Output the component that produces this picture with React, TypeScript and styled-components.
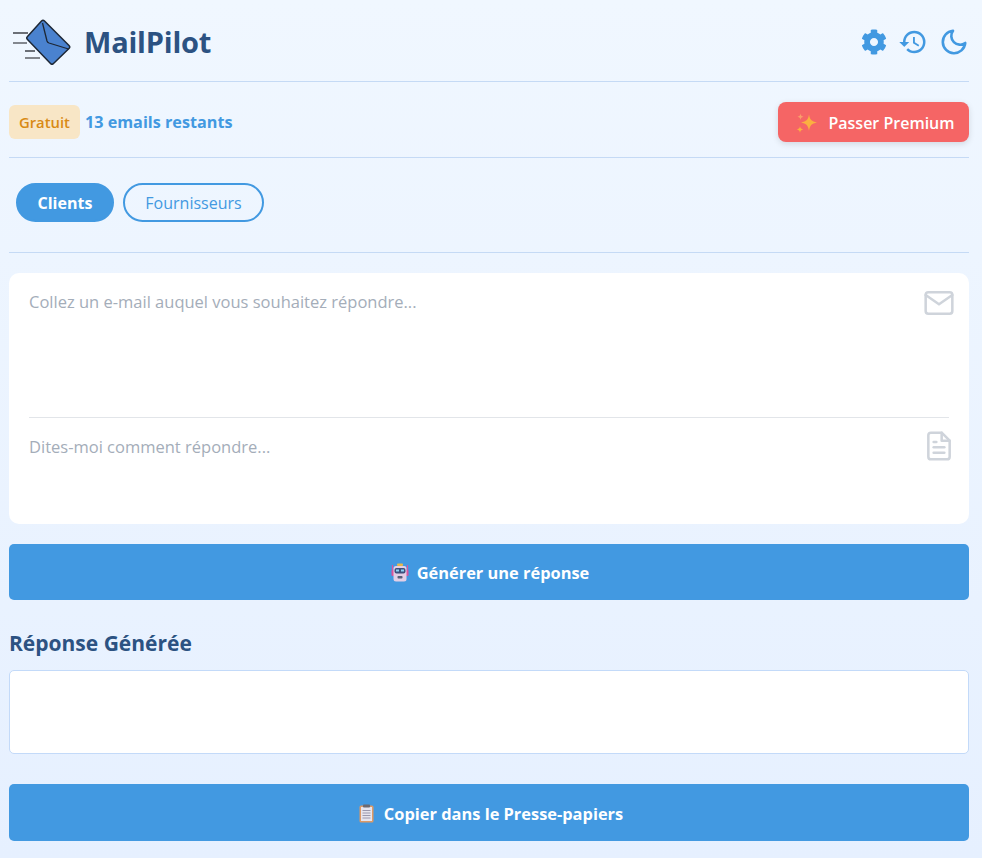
import React, { useState } from 'react';
import styled, { createGlobalStyle } from 'styled-components';
import { FaCog } from 'react-icons/fa';
import { FiMail, FiFileText, FiMoon } from 'react-icons/fi';
import { MdHistory } from 'react-icons/md';

const GlobalStyle = createGlobalStyle`
  html, body {
    margin: 0;
    padding: 0;
  }
  body {
    min-height: 858px;
    background: linear-gradient(180deg, #f0f7ff 0%, #e6f0ff 100%);
    font-family: "Open Sans", "Noto Sans", "Liberation Sans", sans-serif;
  }
  * {
    box-sizing: border-box;
  }
`;

const Page = styled.div`
  padding: 0 13px 0 9px;
  display: flex;
  flex-direction: column;
`;

const Header = styled.header`
  height: 82px;
  padding-top: 2px;
  display: flex;
  align-items: center;
  justify-content: space-between;
  border-bottom: 1px solid #c5daf5;
`;

const Brand = styled.div`
  display: flex;
  align-items: center;
  gap: 13px;
  padding-left: 4px;
`;

const Title = styled.h1`
  margin: 0;
  font-size: 29px;
  font-weight: 700;
  color: #2c5282;
  letter-spacing: -0.2px;
`;

const IconBar = styled.div`
  display: flex;
  align-items: center;
  gap: 11px;
  color: #4299e1;
`;

const IconButton = styled.button`
  padding: 0;
  border: none;
  background: none;
  color: inherit;
  display: flex;
  cursor: pointer;
`;

const PlanRow = styled.div`
  height: 76px;
  padding-top: 4px;
  display: flex;
  align-items: center;
  justify-content: space-between;
  border-bottom: 1px solid #c5daf5;
`;

const PlanInfo = styled.div`
  display: flex;
  align-items: center;
  gap: 5px;
`;

const PlanBadge = styled.span`
  height: 34px;
  padding: 0 10px;
  display: flex;
  align-items: center;
  border-radius: 6px;
  background: #f8e6c6;
  color: #d98a14;
  font-size: 14.8px;
  font-weight: 600;
`;

const Remaining = styled.span`
  color: #4299e1;
  font-size: 16.2px;
  font-weight: 700;
`;

const PremiumButton = styled.button`
  width: 191px;
  height: 40px;
  padding: 2px 0 0 4px;
  display: flex;
  align-items: center;
  justify-content: center;
  gap: 10px;
  border: none;
  border-radius: 8px;
  background: #f56565;
  color: #fff;
  font-family: inherit;
  font-size: 16px;
  font-weight: 600;
  box-shadow: 0 2px 6px rgba(0, 0, 0, 0.12);
  cursor: pointer;
`;

const Tabs = styled.div`
  height: 95px;
  padding: 25px 7px 0;
  display: flex;
  align-items: flex-start;
  gap: 9px;
  border-bottom: 1px solid #c5daf5;
`;

const Tab = styled.button<{ $active?: boolean }>`
  height: 39px;
  padding: 0 ${(p) => (p.$active ? 19.5 : 20.5)}px;
  border: 2px solid #4299e1;
  border-radius: 20px;
  background: ${(p) => (p.$active ? '#4299e1' : 'transparent')};
  color: ${(p) => (p.$active ? '#fff' : '#4299e1')};
  font-family: inherit;
  font-size: 16px;
  font-weight: ${(p) => (p.$active ? 700 : 400)};
  cursor: pointer;
`;

const InputCard = styled.div`
  margin-top: 20px;
  height: 251px;
  padding: 0 20px;
  display: flex;
  flex-direction: column;
  border-radius: 10px;
  background: #fff;
`;

const Field = styled.div<{ $first?: boolean }>`
  position: relative;
  height: ${(p) => (p.$first ? 145 : 105)}px;
  padding-top: 18px;
  border-bottom: ${(p) => (p.$first ? '1px solid #e2e5e9' : 'none')};
`;

const Prompt = styled.textarea`
  width: 100%;
  height: 60px;
  padding: 0;
  border: none;
  outline: none;
  resize: none;
  background: transparent;
  font-family: inherit;
  font-size: 16.5px;
  line-height: 22px;
  color: #2d3748;

  &::placeholder {
    color: #a4adb9;
    opacity: 1;
  }
`;

const FieldIcon = styled.span<{ $top: number }>`
  position: absolute;
  top: ${(p) => p.$top}px;
  right: -6px;
  display: flex;
  color: #cfd4db;
`;

const ActionButton = styled.button<{ $top: number; $height: number }>`
  width: 100%;
  height: ${(p) => p.$height}px;
  margin-top: ${(p) => p.$top}px;
  padding: 1px 0 0 2px;
  display: flex;
  align-items: center;
  justify-content: center;
  gap: 8px;
  border: none;
  border-radius: 5px;
  background: #4299e1;
  color: #fff;
  font-family: inherit;
  font-size: 16.4px;
  font-weight: 700;
  cursor: pointer;
`;

const SectionTitle = styled.h2`
  margin: 29px 0 0;
  height: 41px;
  font-size: 21px;
  line-height: 28px;
  font-weight: 700;
  color: #2c5282;
`;

const Output = styled.div`
  height: 84px;
  border: 1px solid #c3daf9;
  border-radius: 5px;
  background: #fff;
`;

function Logo() {
  return (
    <svg width="58" height="46" viewBox="0 0 58 46">
      <g stroke="#33363d" strokeWidth="1.4">
        <path d="M0 14h15" />
        <path d="M0 24h14" stroke="#55585f" />
        <path d="M12 32h10" />
        <path d="M12 39h15" stroke="#66696f" strokeWidth="1.6" />
      </g>
      <path
        d="M14.500 17.500 28.500 2q1.500-1.500 3 0L56 26.500q1.500 1.500 0 3L40.500 44.500q-1.500 1.500-3 0L14.500 20.500q-1.500-1.500 0-3Z"
        fill="#4a82cf"
        stroke="#1d2735"
        strokeWidth="1.5"
        strokeLinejoin="round"
      />
      <path d="M29.500 4 34 22q.5 1.500 2 2L55.500 30" fill="none" stroke="#1d2735" strokeWidth="1.300" />
    </svg>
  );
}

function Sparkles() {
  return (
    <svg width="22" height="22" viewBox="0 0 22 22">
      <path d="M13 2.500c.8 5 2.500 7 8 8-5.500 1-7.200 3-8 8.500-.8-5.500-2.500-7.500-8-8.500 5.500-1 7.200-3 8-8Z" fill="#fbb040" />
      <path d="M4.500 1.500c.3 2 1 2.800 3 3.200-2 .4-2.700 1.200-3 3.200-.3-2-1-2.800-3-3.200 2-.4 2.700-1.200 3-3.200Z" fill="#fa9d6a" />
      <path d="M4 14c.3 2.200 1.100 3 3.200 3.400C5.100 17.800 4.300 18.600 4 21c-.3-2.400-1.100-3.200-3.200-3.600C2.900 17 3.700 16.200 4 14Z" fill="#fbb040" />
    </svg>
  );
}

function Robot() {
  return (
    <svg width="18" height="20" viewBox="0 0 18 20">
      <rect x="6" y="0.500" width="6" height="2.500" rx="1" fill="#e4b84c" />
      <path d="M1.500 2v7M16.500 2v7" stroke="#d9559c" strokeWidth="1.200" />
      <rect x="0.500" y="7" width="2.500" height="6" rx="1" fill="#d9559c" />
      <rect x="15" y="7" width="2.500" height="6" rx="1" fill="#d9559c" />
      <rect x="2.500" y="3" width="13" height="15.500" rx="2.500" fill="#e3cfe6" />
      <rect x="3.500" y="5" width="11" height="5.500" rx="2" fill="#3d4f7c" />
      <rect x="5" y="6.500" width="3" height="2" fill="#8fd3f5" />
      <rect x="10" y="6.500" width="3" height="2" fill="#8fd3f5" />
      <rect x="6.500" y="13" width="5" height="2.500" rx="0.800" fill="#5a5f78" />
    </svg>
  );
}

function Clipboard() {
  return (
    <svg width="19" height="19" viewBox="-2 0 19 19">
      <rect x="0.500" y="1.500" width="14" height="17" rx="1.500" fill="#dd9a66" />
      <rect x="2" y="3" width="11" height="14" fill="#e6e5ee" />
      <rect x="4" y="0.500" width="7" height="3" rx="0.800" fill="#6d6a70" />
      <path d="M3.500 6.500h8M3.500 9h8M3.500 11.500h8M3.500 14h8" stroke="#9a98ad" strokeWidth="1" />
    </svg>
  );
}

export default function App() {
  const [tab, setTab] = useState('clients');

  return (
    <>
      <GlobalStyle />
      <Page>
        <Header>
          <Brand>
            <Logo />
            <Title>MailPilot</Title>
          </Brand>
          <IconBar>
            <IconButton aria-label="Réglages"><FaCog size={26} /></IconButton>
            <IconButton aria-label="Historique"><MdHistory size={30} /></IconButton>
            <IconButton aria-label="Mode sombre"><FiMoon size={30} strokeWidth={2.1} /></IconButton>
          </IconBar>
        </Header>

        <PlanRow>
          <PlanInfo>
            <PlanBadge>Gratuit</PlanBadge>
            <Remaining>13 emails restants</Remaining>
          </PlanInfo>
          <PremiumButton><Sparkles />Passer Premium</PremiumButton>
        </PlanRow>

        <Tabs>
          <Tab $active={tab === 'clients'} onClick={() => setTab('clients')}>Clients</Tab>
          <Tab $active={tab === 'fournisseurs'} onClick={() => setTab('fournisseurs')}>Fournisseurs</Tab>
        </Tabs>

        <InputCard>
          <Field $first>
            <Prompt placeholder="Collez un e-mail auquel vous souhaitez répondre..." />
            <FieldIcon $top={14}><FiMail size={32} strokeWidth={1.9} /></FieldIcon>
          </Field>
          <Field>
            <Prompt placeholder="Dites-moi comment répondre..." />
            <FieldIcon $top={12}><FiFileText size={32} strokeWidth={1.9} /></FieldIcon>
          </Field>
        </InputCard>

        <ActionButton $top={20} $height={56}><Robot />Générer une réponse</ActionButton>

        <SectionTitle>Réponse Générée</SectionTitle>
        <Output />

        <ActionButton $top={30} $height={57}><Clipboard />Copier dans le Presse-papiers</ActionButton>
      </Page>
    </>
  );
}
